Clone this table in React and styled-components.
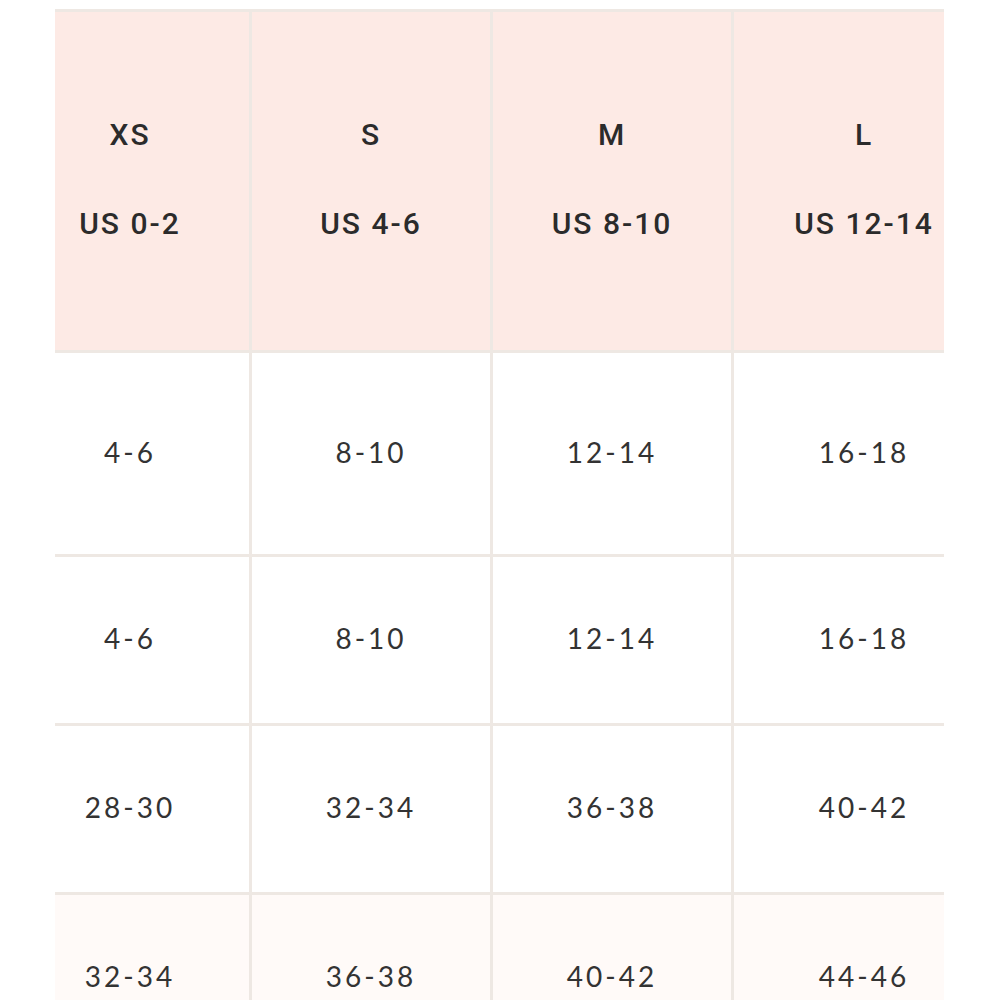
import React from 'react';
import styled, {createGlobalStyle} from "styled-components";

const GlobalStyle = createGlobalStyle`
  html, body {
    margin: 0;
    padding: 0;
    background: #ffffff;
  }
`

const sizes = [
    {name: 'XS', us: 'US 0-2'},
    {name: 'S', us: 'US 4-6'},
    {name: 'M', us: 'US 8-10'},
    {name: 'L', us: 'US 12-14'},
];

const rows = [
    {height: 201, values: ['4-6', '8-10', '12-14', '16-18']},
    {height: 166, values: ['4-6', '8-10', '12-14', '16-18']},
    {height: 166, values: ['28-30', '32-34', '36-38', '40-42']},
    {height: 166, values: ['32-34', '36-38', '40-42', '44-46'], tint: true},
];

const App = () => {
    return (
        <Page>
            <GlobalStyle/>
            <TableScroll>
                <SizeGrid>
                    {sizes.map(s => (
                        <HeadCell key={s.name}>
                            <span>{s.name}</span>
                            <span>{s.us}</span>
                        </HeadCell>
                    ))}
                    {rows.map((row, i) =>
                        row.values.map((v, j) => (
                            <BodyCell key={i + '-' + j} $height={row.height} $tint={row.tint}>
                                {v}
                            </BodyCell>
                        ))
                    )}
                </SizeGrid>
            </TableScroll>
        </Page>
    );
};

const Page = styled.div`
  width: 1000px;
  height: 1000px;
  overflow: hidden;
  padding-top: 9px;
  box-sizing: border-box;
`

const TableScroll = styled.div`
  margin-left: 55px;
  width: 889px;
  overflow: hidden;
`

const SizeGrid = styled.div`
  display: grid;
  grid-template-columns: 238px 238px 238px 260px;
  gap: 3px;
  padding-top: 3px;
  margin-left: -44px;
  width: max-content;
  background: #eee8e3;
`

const HeadCell = styled.div`
  height: 338px;
  box-sizing: border-box;
  padding-bottom: 4px;
  background: #fdeae5;
  display: flex;
  flex-direction: column;
  align-items: center;
  justify-content: center;
  gap: 58px;
  font-family: Roboto, "Liberation Sans", sans-serif;
  font-weight: 500;
  font-size: 30px;
  line-height: 31px;
  letter-spacing: 2px;
  color: #2b2b2b;
`

const BodyCell = styled.div`
  height: ${p => p.$height}px;
  box-sizing: border-box;
  padding-bottom: 4px;
  background: ${p => p.$tint ? '#fffaf8' : '#ffffff'};
  display: flex;
  align-items: center;
  justify-content: center;
  font-family: Lato, "Noto Sans", sans-serif;
  font-weight: 400;
  font-size: 28px;
  letter-spacing: 3px;
  color: #333333;
`

export default App;
